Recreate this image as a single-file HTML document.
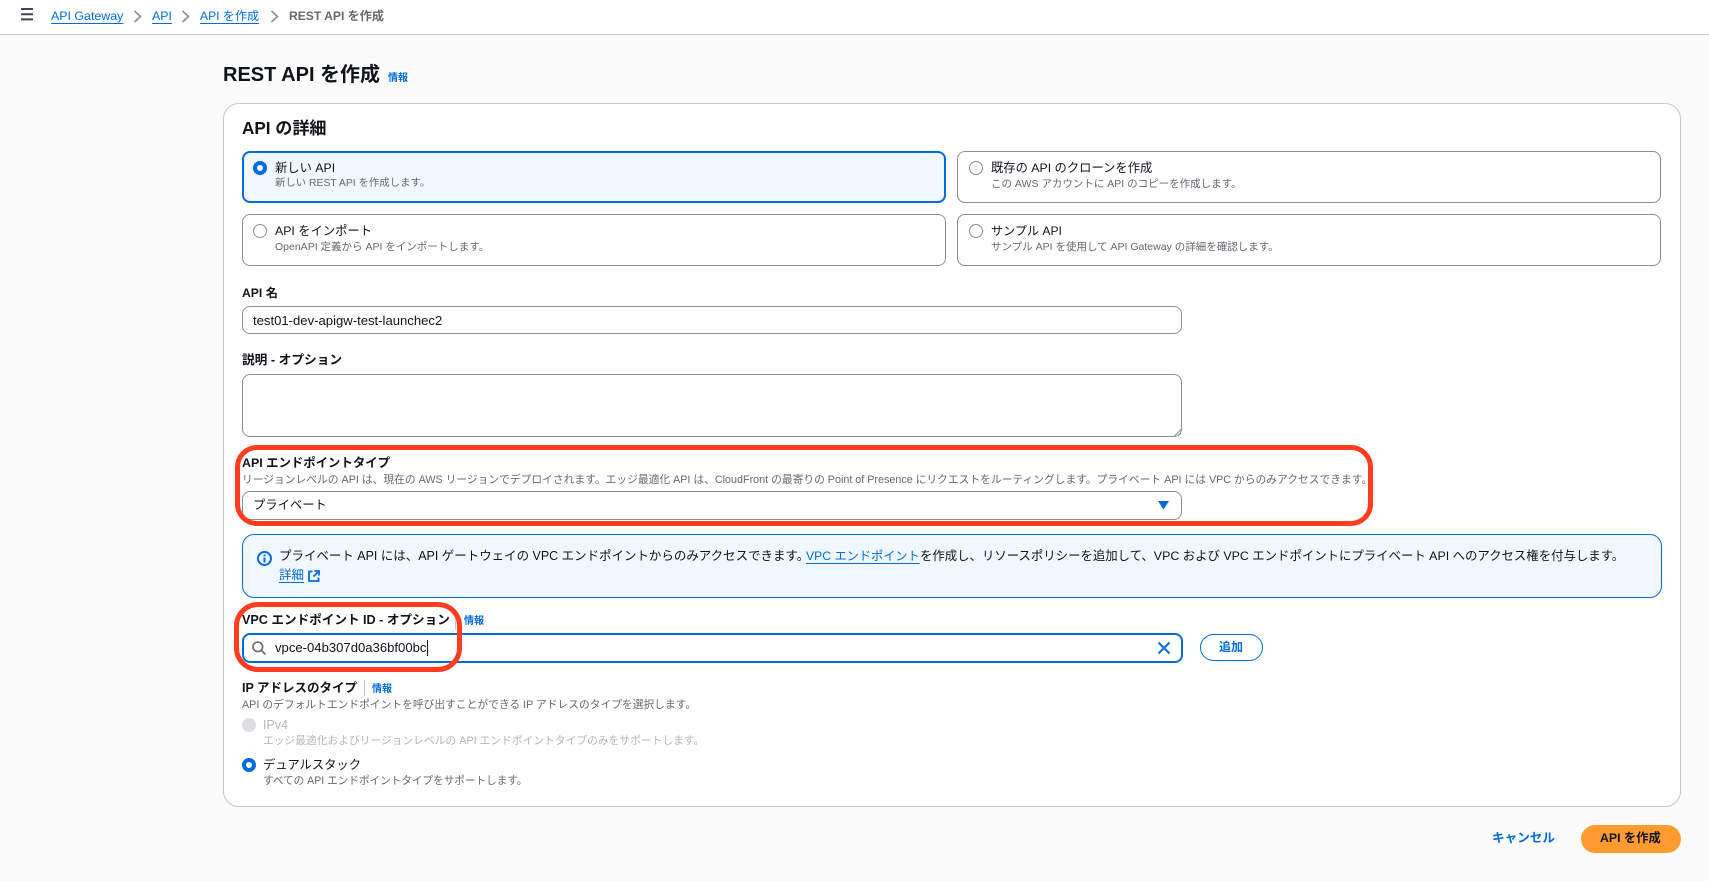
<!DOCTYPE html>
<html lang="ja"><head><meta charset="utf-8"><title>REST API を作成</title>
<style>
html,body{margin:0;padding:0}
body{width:1709px;height:881px;overflow:hidden;position:relative;background:#fbfbfc;font-family:"Liberation Sans","Noto Sans CJK JP",sans-serif;font-size:12.4px;color:#0f141a}
.t{position:absolute;white-space:nowrap;line-height:20px;height:20px}
.b{position:absolute;box-sizing:border-box}
.l{color:#006ce0}
.u{text-decoration:underline;text-underline-offset:3px}
.bd{font-weight:700}
.d{font-size:10.5px;color:#656871}
.box{background:#fff;border:1px solid #8c8c94;border-radius:8px}
svg{position:absolute;overflow:visible}
</style></head><body>
<div class="b" style="left:0;top:0;width:1709px;height:35px;background:#fff;border-bottom:1px solid #c6c6cd"></div>
<svg style="left:21px;top:8px" width="12" height="12" fill="none" stroke="#424650" stroke-width="2"><path d="M0 1H12M0 6.2H12M0 11.4H12"/></svg>
<a class="t l u" style="left:51px;top:6px">API Gateway</a>
<svg style="left:134px;top:10px" width="8" height="13" fill="none" stroke="#8c8c94" stroke-width="1.6"><path d="M0.5 1L6.5 6.5L0.5 12"/></svg>
<a class="t l u" style="left:152px;top:6px">API</a>
<svg style="left:182px;top:10px" width="8" height="13" fill="none" stroke="#8c8c94" stroke-width="1.6"><path d="M0.5 1L6.5 6.5L0.5 12"/></svg>
<a class="t l u" style="left:200px;top:6px;font-size:12.1px">API を作成</a>
<svg style="left:271px;top:10px" width="8" height="13" fill="none" stroke="#8c8c94" stroke-width="1.6"><path d="M0.5 1L6.5 6.5L0.5 12"/></svg>
<span class="t bd" style="left:289px;top:6px;color:#656871;font-size:12.1px">REST API を作成</span>

<span class="t bd" style="left:223px;top:65px;font-size:20px">REST API を作成</span>
<span class="t l bd" style="left:388px;top:69px;font-size:10px">情報</span>

<div class="b" style="left:223px;top:103px;width:1458px;height:704px;background:#fff;border:1px solid #c6c6cd;border-radius:16px"></div>
<span class="t bd" style="left:242px;top:119px;font-size:17.1px">API の詳細</span>

<div class="b box" style="left:242px;top:151px;width:704px;height:52px;background:#f0f7ff;border:2px solid #006ce0"></div>
<div class="b box" style="left:957px;top:151px;width:704px;height:52px"></div>
<div class="b box" style="left:242px;top:214px;width:704px;height:52px"></div>
<div class="b box" style="left:957px;top:214px;width:704px;height:52px"></div>

<svg style="left:253px;top:161px" width="14" height="14"><circle cx="7" cy="7" r="5" fill="#fff" stroke="#006ce0" stroke-width="4"/></svg>
<span class="t" style="left:275px;top:158px;font-size:12.3px">新しい API</span>
<span class="t d" style="left:275px;top:174px;font-size:10.4px">新しい REST API を作成します。</span>

<svg style="left:969px;top:161px" width="14" height="14"><circle cx="7" cy="7" r="6.5" fill="#fff" stroke="#8c8c94"/></svg>
<span class="t" style="left:991px;top:158px;font-size:12.3px">既存の API のクローンを作成</span>
<span class="t d" style="left:991px;top:174px">この AWS アカウントに API のコピーを作成します。</span>

<svg style="left:253px;top:224px" width="14" height="14"><circle cx="7" cy="7" r="6.5" fill="#fff" stroke="#8c8c94"/></svg>
<span class="t" style="left:275px;top:221px;font-size:12.3px">API をインポート</span>
<span class="t d" style="left:275px;top:237px">OpenAPI 定義から API をインポートします。</span>

<svg style="left:969px;top:224px" width="14" height="14"><circle cx="7" cy="7" r="6.5" fill="#fff" stroke="#8c8c94"/></svg>
<span class="t" style="left:991px;top:221px;font-size:12.1px">サンプル API</span>
<span class="t d" style="left:991px;top:237px">サンプル API を使用して API Gateway の詳細を確認します。</span>

<span class="t bd" style="left:242px;top:283px;font-size:12.2px">API 名</span>
<div class="b box" style="left:242px;top:306px;width:940px;height:28px"></div>
<span class="t" style="left:253px;top:311px;font-size:13.1px">test01-dev-apigw-test-launchec2</span>

<span class="t bd" style="left:242px;top:350px;font-size:12.7px">説明 - オプション</span>
<div class="b box" style="left:242px;top:374px;width:940px;height:63px"></div>
<svg style="left:1174px;top:429px" width="7" height="7" fill="none" stroke="#8c8c94"><path d="M0.5 7L7 0.5M4 7L7 4"/></svg>

<span class="t bd" style="left:242px;top:453px">API エンドポイントタイプ</span>
<span class="t d" style="left:242px;top:470px;font-size:10.75px">リージョンレベルの API は、現在の AWS リージョンでデプロイされます。エッジ最適化 API は、CloudFront の最寄りの Point of Presence にリクエストをルーティングします。プライベート API には VPC からのみアクセスできます。</span>
<div class="b box" style="left:242px;top:491px;width:940px;height:29px"></div>
<span class="t" style="left:253px;top:495px;font-size:12.3px">プライベート</span>
<svg style="left:1158px;top:501px" width="11" height="9"><path d="M0 0H11L5.5 8.5Z" fill="#006ce0"/></svg>

<div class="b" style="left:235px;top:445px;width:1138px;height:81px;border:5px solid #ff3b20;border-radius:22px"></div>

<div class="b" style="left:242px;top:534px;width:1420px;height:64px;background:#f0f7ff;border:1px solid #006ce0;border-radius:12px"></div>
<svg style="left:257px;top:551px" width="15" height="15" fill="none" stroke="#006ce0" stroke-width="2"><circle cx="7.5" cy="7.5" r="6.5"/><path d="M7.5 6.5V11.5M7.5 3.5V5.2"/></svg>
<span class="t" style="left:279px;top:546px;font-size:12.48px">プライベート API には、API ゲートウェイの VPC エンドポイントからのみアクセスできます。</span>
<a class="t l u" style="left:806px;top:546px;font-size:12.2px">VPC エンドポイント</a>
<span class="t" style="left:920px;top:546px;font-size:12.4px">を作成し、リソースポリシーを追加して、VPC および VPC エンドポイントにプライベート API へのアクセス権を付与します。</span>
<a class="t l u" style="left:279px;top:565px;font-size:12.5px">詳細</a>
<svg style="left:308px;top:570px" width="12" height="12" fill="none" stroke="#006ce0" stroke-width="1.8"><path d="M4.5 1.5H1V11H10.5V7.5M6.5 1H11V5.5M11 1L5.5 6.5"/></svg>

<span class="t bd" style="left:242px;top:610px;font-size:12.6px">VPC エンドポイント ID - オプション</span>
<div class="b" style="left:455px;top:612px;width:1px;height:18px;background:#c6c6cd"></div>
<span class="t l bd" style="left:464px;top:612px;font-size:10px">情報</span>
<div class="b box" style="left:242px;top:633px;width:941px;height:30px;border:2px solid #006ce0"></div>
<svg style="left:252px;top:641px" width="14" height="14" fill="none" stroke="#656871" stroke-width="1.6"><circle cx="5.8" cy="5.8" r="4.8"/><path d="M9.3 9.3L13.5 13.5"/></svg>
<span class="t" style="left:275px;top:638px;font-size:13.1px">vpce-04b307d0a36bf00bc</span>
<div class="b" style="left:427px;top:640px;width:1px;height:16px;background:#0f141a"></div>
<svg style="left:1158px;top:642px" width="12" height="12" fill="none" stroke="#006ce0" stroke-width="2"><path d="M0.5 0.5L11.5 11.5M11.5 0.5L0.5 11.5"/></svg>
<div class="b" style="left:1200px;top:634px;width:63px;height:27px;background:#fff;border:1px solid #006ce0;border-radius:14px"></div>
<span class="t l bd" style="left:1219px;top:637px;font-size:12px">追加</span>

<div class="b" style="left:234px;top:602px;width:228px;height:70px;border:5px solid #ff3b20;border-radius:24px"></div>

<span class="t bd" style="left:242px;top:678px;font-size:12.5px">IP アドレスのタイプ</span>
<div class="b" style="left:364px;top:680px;width:1px;height:16px;background:#c6c6cd"></div>
<span class="t l bd" style="left:372px;top:680px;font-size:10px">情報</span>
<span class="t d" style="left:242px;top:695px;font-size:10.75px">API のデフォルトエンドポイントを呼び出すことができる IP アドレスのタイプを選択します。</span>
<svg style="left:242px;top:718px" width="14" height="14"><circle cx="7" cy="7" r="7" fill="#dedee3"/></svg>
<span class="t" style="left:263px;top:715px;color:#b4b4bb;font-size:12.5px">IPv4</span>
<span class="t d" style="left:263px;top:731px;color:#b4b4bb;font-size:10.75px">エッジ最適化およびリージョンレベルの API エンドポイントタイプのみをサポートします。</span>
<svg style="left:242px;top:758px" width="14" height="14"><circle cx="7" cy="7" r="5" fill="#fff" stroke="#006ce0" stroke-width="4"/></svg>
<span class="t" style="left:263px;top:755px;font-size:12.3px">デュアルスタック</span>
<span class="t d" style="left:263px;top:771px;font-size:10.6px">すべての API エンドポイントタイプをサポートします。</span>

<span class="t l bd" style="left:1492px;top:828px;font-size:12.6px">キャンセル</span>
<div class="b" style="left:1581px;top:825px;width:100px;height:28px;background:#ff9b2f;border-radius:14px"></div>
<span class="t bd" style="left:1600px;top:828px;font-size:12.3px">API を作成</span>
</body></html>
